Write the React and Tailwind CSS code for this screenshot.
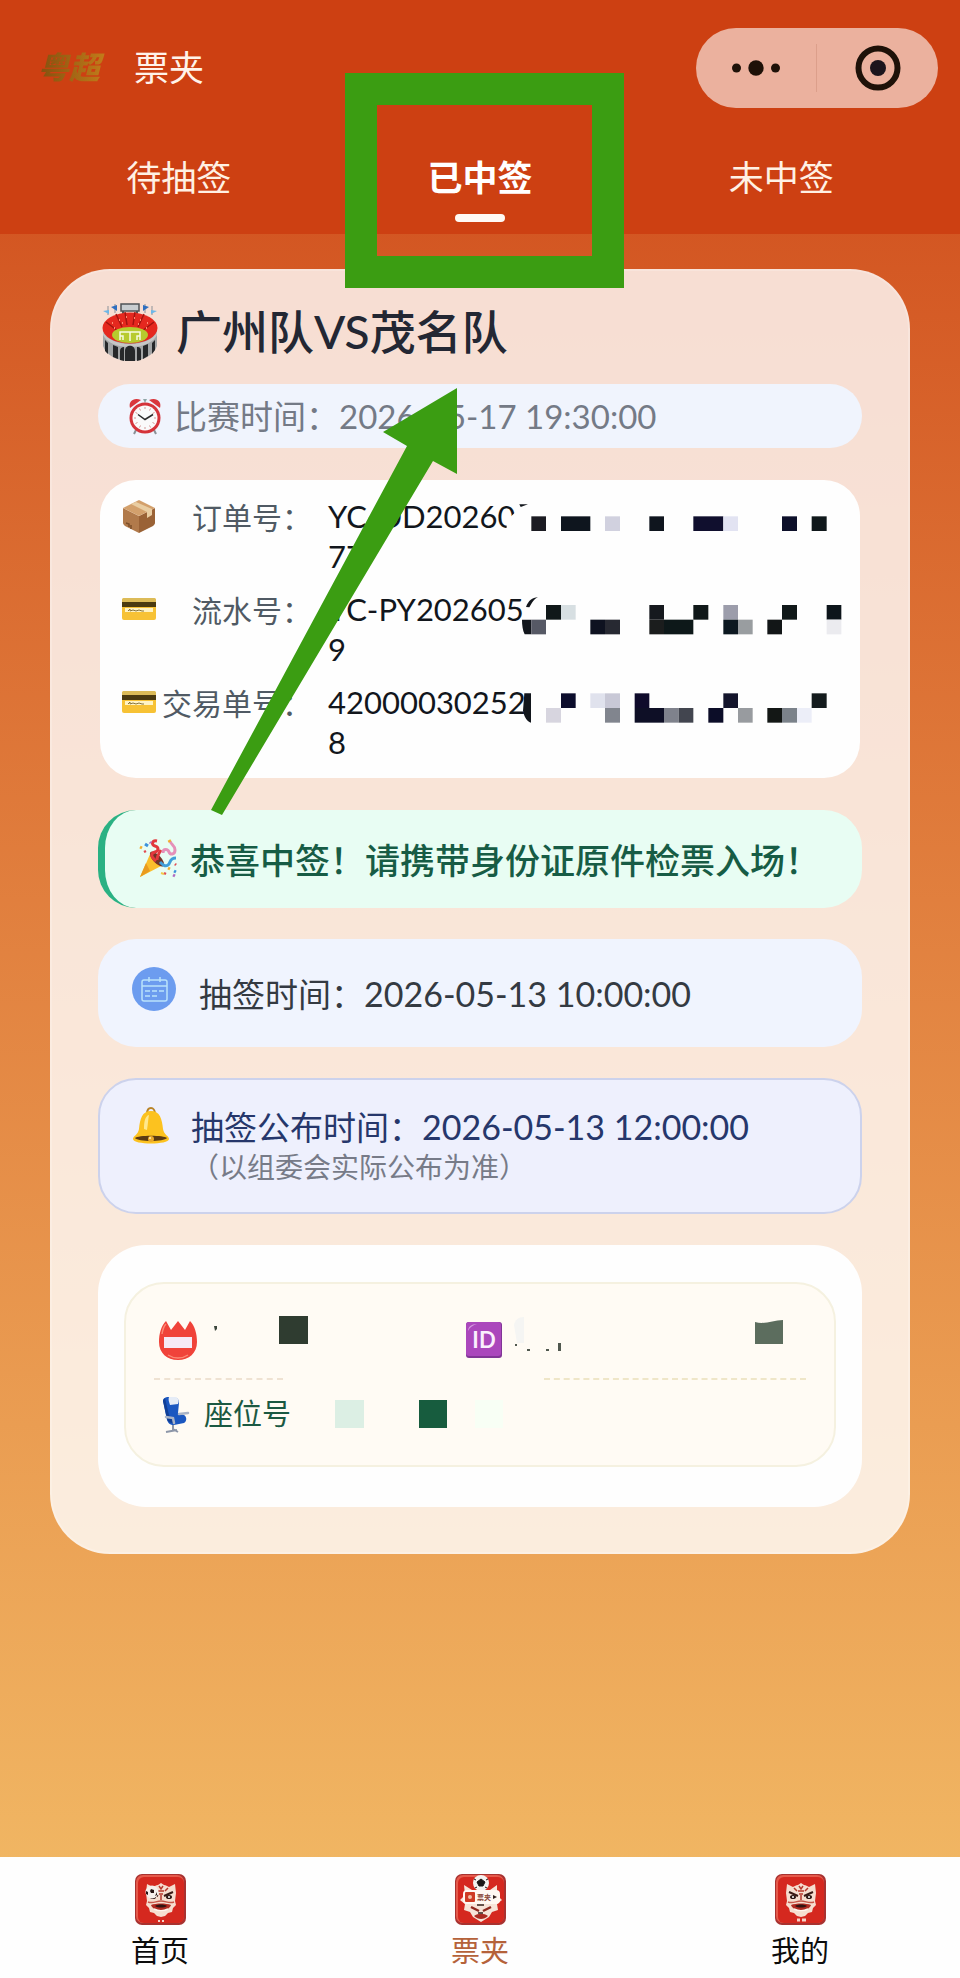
import React, { useState } from "react";

const StadiumIcon = () => (
  <svg viewBox="0 0 56 58" className="w-14 h-[58px] shrink-0" aria-hidden="true">
    <path d="M6 3v9M50 3v9M13 1v9M43 1v9" stroke="#8b9299" strokeWidth="1" />
    <path d="M1 8l6-1v4zM55 8l-6-1v4z" fill="#6db7e8" />
    <path d="M9 4l6-2v6zM47 4l-6-2v6z" fill="#2f6fc0" />
    <path d="M21 7v5M35 7v5" stroke="#555" strokeWidth="2" />
    <rect x="19" y="1" width="18" height="7" fill="#c9cdd0" stroke="#4f5357" strokeWidth="1.5" />
    <path d="M1 28v15c3 9 14 15 27 15s24-6 27-15V28z" fill="#a3a5a6" />
    <path d="M1 28c3 8 14 13 27 13s24-5 27-13v4c-4 8-14 12-27 12S5 40 1 32z" fill="#c5c6c6" />
    <ellipse cx="28" cy="25" rx="27.500" ry="15.500" fill="#e5281f" />
    <path d="M14 11l6 13M23 9l2 13M33 9l-2 13M42 11l-6 13M4 19l12 9M52 19l-12 9" stroke="#a3140f" strokeWidth="1.500" />
    <path d="M10 20h1M17 17h1M24 14h1M32 15h1M38 17h1M45 20h1M20 20h1M36 21h1M12 25h1M44 25h1" stroke="#ff8b72" strokeWidth="2" />
    <ellipse cx="28" cy="32" rx="18" ry="8" fill="#b7cb2e" />
    <path d="M18 37v-8h20v8M28 29v9M18 33h3v4M38 33h-3v4" fill="none" stroke="#f7fbe0" strokeWidth="1.500" />
    <path d="M3 37v11l3 3V40zM11 42v12l5 2V44zM18 57V48c0-3 2-4 4-4v14zM23 58V48c0-7 10-7 10 0v10zM35 58V44c3 0 4 1 4 4v9zM41 56V43l5-2v12zM50 40v11l3-4V37z" fill="#26282a" />
  </svg>
);

const ClockIcon = () => (
  <svg viewBox="0 0 34 38" className="w-[34px] h-[38px] shrink-0" aria-hidden="true">
    <path d="M8 33l-2 4M26 33l2 4" stroke="#8a9197" strokeWidth="2" />
    <path d="M2 11C0 4 6 0 13 3z" fill="#d9353b" />
    <path d="M32 11c2-7-4-11-11-8z" fill="#d9353b" />
    <path d="M15 2h4l-2 4z" fill="#8ea6a8" />
    <circle cx="17" cy="21" r="15.500" fill="#d5333a" />
    <circle cx="17" cy="21" r="12.500" fill="#fafafa" />
    <path d="M17 10v2M17 30v2M6 21h2M26 21h2M11.500 11.500l1 2M22.500 11.500l-1 2M11.500 30.500l1-2M22.500 30.500l-1-2M7.500 15.500l2 1M26.500 15.500l-2 1M7.500 26.500l2-1M26.500 26.500l-2-1" stroke="#d49896" strokeWidth="1" />
    <path d="M10 17.500l7 5 8-5" fill="none" stroke="#2a2a2a" strokeWidth="1.500" />
  </svg>
);

const BoxIcon = () => (
  <svg viewBox="0 0 34 34" className="w-[34px] h-[34px]" aria-hidden="true">
    <path d="M1 9l16 8v17L3 27c-1-1-2-2-2-3z" fill="#b17a4b" />
    <path d="M33 9l-16 8v17l14-7c1-1 2-2 2-3z" fill="#9a6236" />
    <path d="M1 9L17 1l16 8-16 8z" fill="#d3a06c" />
    <path d="M9 5l16 8v6l5-3v-6L14 3z" fill="#e9cda2" />
    <path d="M4 24l3 1v3M9 26v4" stroke="#7c4f2a" strokeWidth="1.500" fill="none" />
  </svg>
);

const CardIcon = () => (
  <svg viewBox="0 0 34 24" className="w-[34px] h-6" aria-hidden="true">
    <rect x="0" y="1" width="34" height="22" rx="2" fill="#f7c235" />
    <path d="M2 1h30c1 0 2 1 2 2v2H0V3c0-1 1-2 2-2z" fill="#dcbb58" />
    <rect y="5" width="34" height="5" fill="#4b3a10" />
    <rect x="3" y="11" width="28" height="4" fill="#fff3c4" />
    <path d="M6 14l2-2v2l3-1 3 1 3-1 3 1h2" fill="none" stroke="#86743c" strokeWidth="1" />
  </svg>
);

const PartyIcon = () => (
  <svg viewBox="0 0 38 40" className="w-[38px] h-10 shrink-0" aria-hidden="true">
    <path d="M1 38L12 13l12 13z" fill="#fbbe2c" />
    <path d="M1 38l6-14 4 8z" fill="#e99b1f" />
    <ellipse cx="18" cy="20" rx="4" ry="9.500" transform="rotate(-43 18 20)" fill="#713426" />
    <path d="M17 22c-6-5-5-8-1-9s4-5 0-6-3-6 2-5" fill="none" stroke="#e2383c" strokeWidth="3" />
    <path d="M18 21c0-4 2-7 4-10" fill="none" stroke="#e2383c" strokeWidth="3" />
    <path d="M24 14c0-5 5-4 6-1s6 3 6-2-4-5-5-9" fill="none" stroke="#e590b8" strokeWidth="3" />
    <path d="M21 23c3 3 5 5 8 3s1-7 8-7" fill="none" stroke="#409ed8" strokeWidth="3" />
    <path d="M6 5l3 2M35 32l2 1" stroke="#3d93dc" strokeWidth="3" />
    <path d="M1 8l2 1M30 1l1 2M29 29l2 1" stroke="#f3af2d" strokeWidth="3" />
    <path d="M5 13l2-1M36 25l1 1M25 34l2 1" stroke="#e04a52" strokeWidth="2.500" />
    <path d="M11 3l1 1M34 36l2 1" stroke="#b26bc1" strokeWidth="3" />
    <path d="M22 34l3 1" stroke="#f3c94a" strokeWidth="2" />
  </svg>
);

const CalendarIcon = () => (
  <svg viewBox="0 0 44 44" className="w-11 h-11 mb-2 shrink-0" aria-hidden="true">
    <circle cx="22" cy="22" r="22" fill="#6c9cef" />
    <g fill="none" stroke="#b9e2fb" strokeWidth="1.500">
      <rect x="10" y="13" width="25" height="21" rx="2" />
      <path d="M10 19h25M17 10v5M28 10v5M13 24h5M20 24h5M27 24h5M13 29h5M20 29h5" />
    </g>
  </svg>
);

const BellIcon = () => (
  <svg viewBox="0 0 38 38" className="w-[38px] h-[38px] shrink-0" aria-hidden="true">
    <path d="M15 7c0-8 8-8 8 0" fill="none" stroke="#b98427" strokeWidth="2" />
    <path d="M1 32c0-3 5-4 6-10C8 12 10 4 19 4s11 8 12 18c1 6 6 7 6 10 0 6-36 6-36 0z" fill="#fcc21f" />
    <path d="M12 22c0-7 1-13 5-14-1 5-1 9-2 15z" fill="#ffe88d" />
    <path d="M3 31c3-3 29-3 32 0-3 4-29 4-32 0z" fill="#5b3a12" />
    <circle cx="19" cy="32" r="3" fill="#e9a82a" />
    <circle cx="18" cy="31" r="1" fill="#fff1bd" />
  </svg>
);

const NameBadgeIcon = () => (
  <svg viewBox="0 0 40 40" className="w-10 h-10" aria-hidden="true">
    <path d="M8 1l5 9 7-9 7 9 5-9c5 5 7 13 7 21 0 11-8 18-19 18S1 33 1 22C1 14 3 6 8 1z" fill="#f0433a" />
    <path d="M4 14C5 8 6 6 8 4M10 35c6 4 14 4 20 0" fill="none" stroke="#fa8a76" strokeWidth="1.500" />
    <rect x="6" y="17" width="28" height="11" fill="#f6eaf6" />
  </svg>
);

const IdIcon = () => (
  <svg viewBox="0 0 36 36" className="w-9 h-9" aria-hidden="true">
    <rect width="36" height="36" rx="3" fill="#813596" />
    <rect width="35" height="34" rx="3" fill="#ab47bc" />
    <path d="M2 9c0-4 3-7 9-7-4 1-7 3-9 7z" fill="#d49be0" />
    <text x="18" y="26" textAnchor="middle" fontSize="22" fontWeight="700" fill="#fbeffd" className="font-['Lato',sans-serif]">
      ID
    </text>
  </svg>
);

const SeatIcon = () => (
  <svg viewBox="0 0 28 36" className="w-7 h-9 shrink-0" aria-hidden="true">
    <path d="M11 25v8M4 35l11-2M11 32l5 3" stroke="#8d96a8" strokeWidth="2" fill="none" />
    <path d="M1 4c0-3 3-4 5-4h6c4 1 5 3 5 6l-1 10 6 2c3 2 3 6 0 8l-10 2c-4 0-6-2-7-5z" fill="#1b57c0" />
    <path d="M1 4c0-1 1-2 2-3l4 17 5 8c-4 0-6-1-7-4z" fill="#123f95" />
    <path d="M7 0h7c3 2 3 4 2 7l-8 1C7 5 6 2 7 0z" fill="#e6ecf6" />
    <path d="M17 17l9-1M4 20l7 1 1 5" stroke="#a9b3c6" strokeWidth="2.500" strokeLinecap="round" fill="none" />
  </svg>
);

const IconTile = ({ children }) => (
  <svg viewBox="0 0 51 51" className="w-[51px] h-[51px]" aria-hidden="true">
    <rect width="51" height="51" rx="7" fill="#a83230" />
    <rect x="1" y="1" width="48" height="48" rx="7" fill="#e55a4b" />
    <rect x="3" y="3" width="46" height="46" rx="6" fill="#d5281f" />
    {children}
  </svg>
);

const LionFace = () => (
  <>
    <path d="M12 10l6 3c2-1 3-2 5-2l3-2 3 2c2 0 3 1 5 2l6-3 1 9-1 8 1 4-3 3-1 4-4 1-3 3-4 1-4-1-3-3-4-1-1-4-3-3 1-4-1-8z" fill="#f6ded0" />
    <path d="M24 12l2 3 2-3M23 17h6M24 20h4M26 21v5M19 14l3 3M33 14l-3 3" fill="none" stroke="#b5382d" strokeWidth="1.500" />
    <path d="M14 18l9 4M38 18l-9 4" stroke="#3a1a16" strokeWidth="2" />
    <ellipse cx="18" cy="23" rx="3" ry="2" fill="#2a1513" />
    <ellipse cx="34" cy="23" rx="3" ry="2" fill="#2a1513" />
    <circle cx="18" cy="23" r="1" fill="#fff" />
    <circle cx="34" cy="23" r="1" fill="#fff" />
    <path d="M13 28c5 2 8-1 13-1s8 3 13 1" fill="none" stroke="#c7584a" strokeWidth="1.500" />
    <path d="M16 31c5-2 15-2 20 0-2 7-18 7-20 0z" fill="#b02b22" />
    <path d="M20 32c3-2 9-2 12 0-3 2-9 2-12 0z" fill="#321412" />
    <path d="M19 35c4 2 10 2 14 0" fill="none" stroke="#fff4ec" strokeWidth="1.500" />
  </>
);

const HomeTile = () => (
  <IconTile>
    <LionFace />
    <circle cx="17" cy="18" r="6.500" fill="#f5f0ec" />
    <path d="M16 15l3 1v3h-3l-1-2zM11 17l2 1v3l-2-1zM20 22l2-1v-3" fill="#251615" />
    <path d="M23 47h2M27 47h2" stroke="#f5d3c9" strokeWidth="2" />
  </IconTile>
);

const TicketTile = () => (
  <IconTile>
    <path d="M9 11l8 5h18l7-5v10l5 5-5 4 1 6-6 2-3 5-8 5-8-5-3-5-6-2 1-6-5-4 5-5z" fill="#f7e4d8" />
    <circle cx="26" cy="9" r="8" fill="#f4f2f0" />
    <path d="M26 5l4 3-2 4h-4l-2-4zM19 5l2 1M33 5l-2 1M20 14l2-1M32 14l-2-1" fill="#1c1717" stroke="#1c1717" />
    <path d="M16 33l8 4M36 33l-8 4" stroke="#8f2920" strokeWidth="2.500" />
    <path d="M19 42c4-3 10-3 14 0-4 4-10 4-14 0z" fill="#ab2b22" />
    <path d="M22 31h7M23 39h5" stroke="#35201b" strokeWidth="1.500" />
    <rect x="8" y="16" width="37" height="14" rx="4" fill="#fff8f2" />
    <rect x="10" y="18" width="10" height="10" rx="1" fill="#cf3b24" />
    <circle cx="15" cy="23" r="2" fill="#f4bfa6" />
    <text x="22" y="26" fontSize="7" fontWeight="700" fill="#8b4a3a" className="font-['Noto_Sans_CJK_SC',sans-serif]">
      票夹
    </text>
    <path d="M38 21l4 2-4 2z" fill="#33211d" />
  </IconTile>
);

const MineTile = () => (
  <IconTile>
    <LionFace />
    <path d="M22 46h3M27 46h4" stroke="#f5d3c9" strokeWidth="3" />
  </IconTile>
);

// censored parts of the order numbers: [x, y, width, colour]
const orderBlocks = [
  [154, 169, 44, "#1b1b22"], [243, 169, 88, "#0e151e"], [375, 169, 45, "#d1d1df"], [508, 169, 44, "#0f151e"],
  [640, 169, 90, "#100f2e"], [730, 169, 44, "#e2e3f2"], [906, 169, 45, "#0d102a"], [995, 169, 45, "#10181b"],
  [198, 435, 45, "#101819"], [243, 435, 44, "#d7dfe2"], [508, 435, 44, "#16191e"], [640, 435, 45, "#101819"],
  [730, 435, 44, "#9c9dab"], [906, 435, 45, "#101819"], [1040, 435, 44, "#0d151b"],
  [154, 479, 44, "#565965"], [331, 479, 44, "#0e1220"], [375, 479, 45, "#272932"], [508, 479, 44, "#1b1d1d"],
  [552, 479, 88, "#0d1819"], [730, 479, 44, "#0c1820"], [774, 479, 44, "#999da0"], [862, 479, 44, "#121617"], [1040, 479, 44, "#ebebef"],
  [243, 700, 44, "#0c0d2c"], [331, 700, 44, "#e0e2ed"], [375, 700, 45, "#c8c8d6"], [464, 700, 44, "#0f0b2b"],
  [730, 700, 44, "#14152c"], [995, 700, 45, "#141b1d"],
  [198, 744, 45, "#d7d5df"], [375, 744, 45, "#81858e"], [464, 744, 88, "#0e0f26"], [552, 744, 44, "#7f828c"],
  [596, 744, 44, "#42454f"], [685, 744, 45, "#0c0d28"], [774, 744, 44, "#989b9f"], [862, 744, 44, "#131715"],
  [906, 744, 45, "#7b828a"], [951, 744, 44, "#eceef8"],
];

const orders = [
  { icon: <BoxIcon />, label: "订单号：", value: "YC-DD20260", rest: "77" },
  { icon: <CardIcon />, label: "流水号：", value: "YC-PY202605", rest: "9" },
  { icon: <CardIcon />, label: "交易单号：", value: "42000030252", rest: "8" },
];

const tabs = ["待抽签", "已中签", "未中签"];

const navItems = [
  { name: "首页", path: "#home", icon: <HomeTile /> },
  { name: "票夹", path: "#tickets", icon: <TicketTile /> },
  { name: "我的", path: "#mine", icon: <MineTile /> },
];

const App = () => {
  const [activeTab, setActiveTab] = useState("已中签");

  return (
    <div className="relative flex flex-col min-h-screen overflow-hidden bg-linear-to-b from-[#ce4717] to-[#f2bc67] font-['Noto_Sans_CJK_SC',sans-serif]">
      {/* Header */}
      <header className="bg-[#cd4012] pt-7">
        <div className="flex items-center h-20 pl-[38px] pr-[22px]">
          <span className="w-24 pb-1 text-[31px] leading-[40px] font-black italic bg-linear-to-r from-[#82500f] to-[#e0901f] bg-clip-text text-transparent">
            粤超
          </span>
          <h1 className="pb-1 text-[35px] leading-[44px] text-[#fff3ea]">票夹</h1>
          <div className="flex items-center w-[242px] h-20 ml-auto rounded-full bg-[#ebb19e]">
            <button className="flex justify-center w-[120px]" aria-label="更多">
              <svg viewBox="0 0 48 16" className="w-12 h-4">
                <circle cx="4.500" cy="8" r="4.500" fill="#1e1108" />
                <circle cx="24" cy="8" r="7.700" fill="#1e1108" />
                <circle cx="43.500" cy="8" r="4.500" fill="#1e1108" />
              </svg>
            </button>
            <div className="w-px h-12 bg-[#dc9f8b]" />
            <button className="flex justify-center flex-1" aria-label="关闭">
              <svg viewBox="0 0 46 46" className="w-[46px] h-[46px]">
                <circle cx="23" cy="23" r="19.500" fill="none" stroke="#1e1108" strokeWidth="6" />
                <circle cx="23" cy="23" r="8" fill="#1c141c" />
              </svg>
            </button>
          </div>
        </div>
        <div className="grid grid-cols-3 px-7">
          {tabs.map((tab) => (
            <button
              key={tab}
              onClick={() => setActiveTab(tab)}
              className={`flex flex-col items-center gap-4 pt-[46px] pb-3 text-[35px] leading-[44px] ${
                activeTab === tab ? "font-bold text-white" : "text-[#fff1e4]"
              }`}
            >
              {tab}
              <span className={`w-[50px] h-2 rounded-full ${activeTab === tab ? "bg-[#fffaf5]" : ""}`} />
            </button>
          ))}
        </div>
      </header>

      {/* Ticket */}
      <main className="flex-1 px-[50px] pt-[35px] pb-12">
        <section className="rounded-[60px] border-2 border-white/20 bg-white/80 px-[46px] pt-[31px] pb-[45px]">
          <div className="flex items-center gap-[18px] h-[60px] pl-1">
            <StadiumIcon />
            <h2 className="pb-1 text-[46px] leading-[60px] font-medium text-[#232733]">
              广州队<span className="font-['Lato',sans-serif]">VS</span>茂名队
            </h2>
          </div>

          <div className="flex items-center gap-3 h-16 mt-[22px] pl-[30px] rounded-full bg-[#f0f4fd] text-[33px] text-[#747a86]">
            <ClockIcon />
            <p>
              比赛时间：<time className="font-['Lato',sans-serif]">2026-05-17 19:30:00</time>
            </p>
          </div>

          <div className="relative flex flex-col gap-[13px] mt-8 mx-0.5 py-4 pl-[22px] rounded-[36px] bg-[#fefefe]">
            {orders.map((order) => (
              <div key={order.label} className="flex leading-[40px]">
                <span className="flex items-center w-[34px] h-10">{order.icon}</span>
                <span className="w-[156px] text-right text-[30px] text-[#505a64]">{order.label}</span>
                <span className="ml-4 text-[31px] text-[#12161c] font-['Lato',sans-serif]">
                  {order.value}
                  <br />
                  {order.rest}
                </span>
              </div>
            ))}
            <svg viewBox="0 0 1140 894" className="absolute top-0 left-[380px] w-[380px] h-[298px]" aria-hidden="true">
              <g transform="translate(0 -60)">
                <path d="M108 155l-26 24-4 40h60v-64z" fill="#fefefe" />
                <path d="M118 133h26l-22 8z" fill="#12161c" />
                <path d="M138 441c8-20 18-28 36-29-14 6-18 18-26 30z" fill="#12161c" />
                <path d="M126 479h28v44h-20c-6-12-8-28-8-44zM133 700h20v88c-14-6-20-18-24-36z" fill="#12161c" />
                {orderBlocks.map(([x, y, w, fill]) => (
                  <rect key={`${x}-${y}`} x={x} y={y} width={w} height="44" fill={fill} />
                ))}
              </g>
            </svg>
          </div>

          <div className="flex items-center gap-[13px] mt-8 py-7 pl-[34px] rounded-[38px] border-l-[7px] border-[#2ab183] bg-[#e8fdf3] text-[35px] leading-[42px] font-medium text-[#175c45]">
            <PartyIcon />
            <p>恭喜中签！请携带身份证原件检票入场！</p>
          </div>

          <div className="flex items-center gap-[23px] mt-[31px] py-7 pl-[34px] rounded-[38px] bg-[#f0f4fe] text-[33px] leading-[44px] text-[#343a42]">
            <CalendarIcon />
            <p>
              抽签时间：<time className="text-[34px] font-['Lato',sans-serif]">2026-05-13 10:00:00</time>
            </p>
          </div>

          <div className="flex gap-[21px] mt-[31px] pt-6 pb-[29px] pl-8 rounded-[38px] border-2 border-[#ccd2ec] bg-[#eef0fd]">
            <div className="flex items-center h-11">
              <BellIcon />
            </div>
            <div>
              <p className="text-[33px] leading-[44px] text-[#26376b]">
                抽签公布时间：<time className="text-[34px] font-['Lato',sans-serif]">2026-05-13 12:00:00</time>
              </p>
              <p className="text-[28px] leading-[34px] text-[#777b88]">（以组委会实际公布为准）</p>
            </div>
          </div>

          <div className="mt-[31px] px-[26px] pt-[37px] pb-10 rounded-[48px] bg-[#fefefe]">
            <div className="relative pt-9 pb-8 rounded-[40px] border-2 border-[#f5f1e0] bg-[#fffbf4]">
              <div className="flex items-center gap-[268px] pl-8">
                <NameBadgeIcon />
                <IdIcon />
              </div>
              <div className="flex justify-between mt-[18px] px-7">
                <div className="w-[129px] border-t-2 border-dashed border-[#efe2d2]" />
                <div className="w-[262px] border-t-2 border-dashed border-[#efe6c8]" />
              </div>
              <div className="flex items-center gap-3.5 h-9 mt-[17px] pl-9">
                <SeatIcon />
                <span className="pb-1 text-[29px] text-[#1b5942]">座位号</span>
              </div>
              {/* censored name, id number and seat */}
              <svg viewBox="0 0 708 181" className="absolute top-0 left-0 w-[708px] h-[181px]" aria-hidden="true">
                <path d="M88 42h3v3l-2 2z" fill="#3c463c" />
                <rect x="153" y="32" width="29" height="28" fill="#2f3c30" />
                <path d="M388 41c1-5 4-8 10-8v26h-7z" fill="#f5f5f3" />
                <path d="M389 61h2M401 66h3M420 66h3" stroke="#50584f" strokeWidth="2" />
                <rect x="432" y="59" width="3" height="8" fill="#50584f" />
                <path d="M629 38c10 3 18-2 28-2v24h-28z" fill="#5c6d5e" />
                <rect x="209" y="116" width="29" height="28" fill="#dcefe4" />
                <rect x="293" y="116" width="28" height="28" fill="#175c3e" />
                <rect x="349" y="116" width="28" height="28" fill="#f8fff5" />
              </svg>
            </div>
          </div>
        </section>
      </main>

      {/* Bottom Navigation */}
      <nav className="grid grid-cols-3 bg-[#fefefe] pt-[17px] pb-2">
        {navItems.map((item) => (
          <a
            key={item.name}
            href={item.path}
            className={`flex flex-col items-center gap-1 text-[29px] leading-[41px] ${
              item.name === "票夹" ? "text-[#b5623a]" : "text-[#0c0c0c]"
            }`}
          >
            {item.icon}
            {item.name}
          </a>
        ))}
      </nav>

      {/* Highlight box and arrow drawn over the active tab */}
      <svg viewBox="0 0 960 840" className="absolute top-0 left-0 w-[960px] h-[840px] pointer-events-none" aria-hidden="true">
        <rect x="361" y="89" width="247" height="183" fill="none" stroke="#3b9d12" strokeWidth="32" />
        <path d="M457 388v86l-24-13-211 354-11-5 196-364-24-14z" fill="#3b9d12" />
      </svg>
    </div>
  );
};

export default App;
